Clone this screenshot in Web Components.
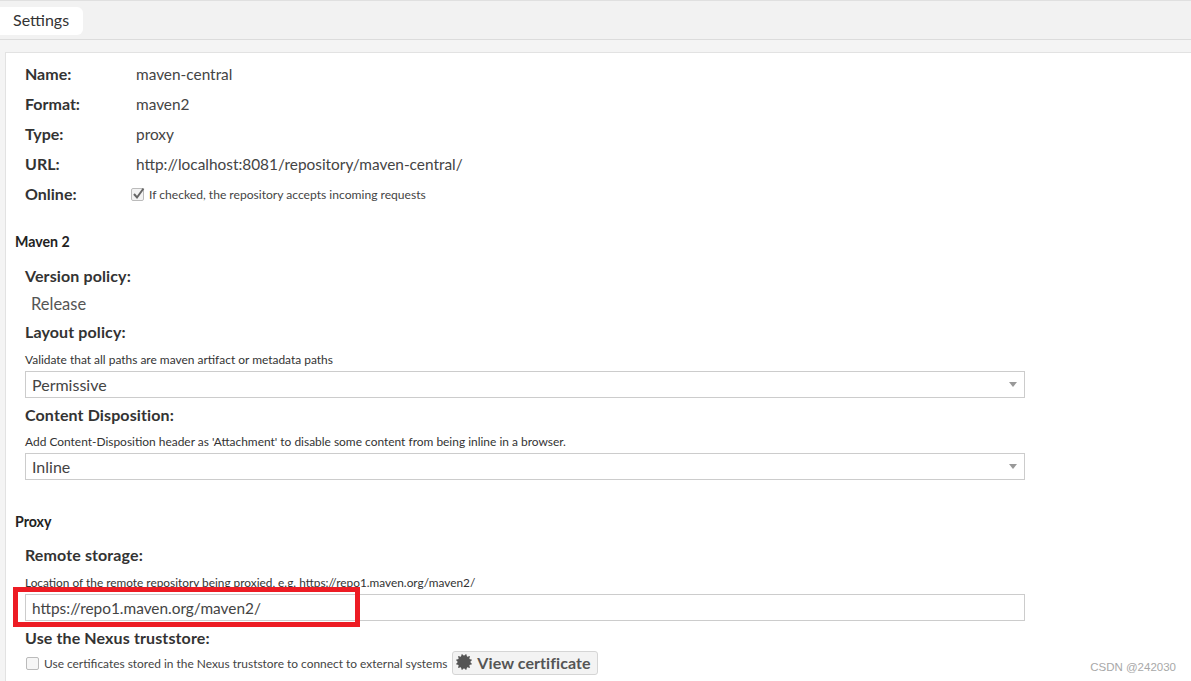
<!DOCTYPE html>
<html>
<head>
<meta charset="utf-8">
<style>
  html, body { margin: 0; height: 100%; overflow: hidden; background: #f4f4f4; }
  body { font-family: "Lato", "Liberation Sans", sans-serif; color: #333; }
</style>
</head>
<body>
<settings-page>
  <tab-bar label="Settings"></tab-bar>
  <form-panel>
    <info-row label="Name:">maven-central</info-row>
    <info-row label="Format:">maven2</info-row>
    <info-row label="Type:">proxy</info-row>
    <info-row label="URL:">http://localhost:8081/repository/maven-central/</info-row>
    <info-row label="Online:" check="checked">If checked, the repository accepts incoming requests</info-row>

    <section-title style="margin-top:25px">Maven 2</section-title>
    <form-field label="Version policy:" plain="Release" style="margin-top:16px"></form-field>
    <form-field label="Layout policy:" help="Validate that all paths are maven artifact or metadata paths" select="Permissive" style="margin-top:8px;--help-top:11px"></form-field>
    <form-field label="Content Disposition:" help="Add Content-Disposition header as 'Attachment' to disable some content from being inline in a browser." select="Inline" style="margin-top:7px"></form-field>

    <section-title style="margin-top:34px">Proxy</section-title>
    <form-field label="Remote storage:" help="Location of the remote repository being proxied, e.g. https://repo1.maven.org/maven2/" input="https://repo1.maven.org/maven2/" style="margin-top:15px;--help-top:11px;--help-size:11.85px"></form-field>
    <form-field label="Use the Nexus truststore:" style="margin-top:7px">
      <trust-line>Use certificates stored in the Nexus truststore to connect to external systems</trust-line>
    </form-field>
  </form-panel>
  <red-mark></red-mark>
  <water-mark>CSDN @242030</water-mark>
</settings-page>

<script>
class SettingsPage extends HTMLElement {
  constructor() {
    super();
    this.attachShadow({ mode: "open" }).innerHTML = `
      <style>
        :host { display: block; position: relative; height: 681px; overflow: hidden; }
      </style>
      <slot></slot>`;
  }
}

class TabBar extends HTMLElement {
  constructor() {
    super();
    this.attachShadow({ mode: "open" }).innerHTML = `
      <style>
        :host {
          display: flex; align-items: flex-start; box-sizing: border-box; height: 40px;
          padding-top: 6px; background: #f2f2f2;
          border-top: 1px solid #e0e0e0; border-bottom: 1px solid #dcdcdc;
        }
        .tab {
          box-sizing: border-box; height: 28px; width: 83px; padding: 0 0 0 13px;
          background: #fff; border-radius: 0 6px 6px 0;
          font-size: 16px; line-height: 26px; color: #333;
        }
      </style>
      <div class="tab"></div>`;
    this.shadowRoot.querySelector(".tab").textContent = this.getAttribute("label");
  }
}

class FormPanel extends HTMLElement {
  constructor() {
    super();
    this.attachShadow({ mode: "open" }).innerHTML = `
      <style>
        :host {
          display: block; box-sizing: border-box; height: 640px; margin: 12px 0 0 5px;
          padding: 6px 0 0 9px; background: #fff;
          border-top: 1px solid #e2e2e2; border-left: 1px solid #e2e2e2;
        }
      </style>
      <slot></slot>`;
  }
}

class InfoRow extends HTMLElement {
  constructor() {
    super();
    const check = this.hasAttribute("check");
    this.attachShadow({ mode: "open" }).innerHTML = `
      <style>
        :host {
          display: grid; grid-template-columns: 111px 1fr; align-items: center;
          height: 30px; padding-left: 10px; color: #333;
        }
        b { font-size: 16px; font-weight: 700; color: #333; position: relative; top: -1px; }
        .val { font-size: 15.4px; color: #444; display: flex; align-items: center; }
        .val.small { font-size: 12.1px; color: #444; gap: 4px; margin-left: -5px; }
        svg { flex: none; }
      </style>
      <b></b>
      <div class="val ${check ? "small" : ""}">
        ${check ? `<svg width="14" height="14" viewBox="0 0 14 14"><rect x=".5" y="1.5" width="12" height="12" rx="1.5" fill="#f3f3f3" stroke="#bbb"/><path d="M3 7l3 3.5L12.5 1.5" fill="none" stroke="#666" stroke-width="2"/></svg>` : ""}
        <slot></slot>
      </div>`;
    this.shadowRoot.querySelector("b").textContent = this.getAttribute("label");
  }
}

class SectionTitle extends HTMLElement {
  constructor() {
    super();
    this.attachShadow({ mode: "open" }).innerHTML = `
      <style>
        :host { display: block; font-size: 14.2px; font-weight: 700; line-height: 16px; color: #222; }
      </style>
      <slot></slot>`;
  }
}

class FormField extends HTMLElement {
  constructor() {
    super();
    const help = this.getAttribute("help");
    const plain = this.getAttribute("plain");
    const select = this.getAttribute("select");
    const input = this.getAttribute("input");
    let body = "";
    if (help) body += `<div class="help"></div>`;
    if (plain) body += `<div class="plain"></div>`;
    if (select) body += `<div class="box"><span class="txt"></span><i class="arrow"></i></div>`;
    if (input) body += `<div class="box url"><span class="txt"></span></div>`;
    this.attachShadow({ mode: "open" }).innerHTML = `
      <style>
        :host { display: block; padding-left: 10px; }
        .label { font-size: 16px; letter-spacing: .12px; font-weight: 700; line-height: 20px; color: #333; }
        .help {
          font-size: var(--help-size, 11.95px); line-height: 14px; color: #333;
          margin-top: var(--help-top, 10px); margin-bottom: 4px;
        }
        .plain { font-size: 16.5px; line-height: 20px; color: #555; padding: 8px 0 0 6px; }
        .box {
          box-sizing: border-box; width: 1000px; height: 27px; padding: 0 6px;
          display: flex; align-items: center; justify-content: space-between;
          border: 1px solid #ccc; background: #fff;
          font-size: 16px; color: #444;
        }
        .box.url { font-size: 15.4px; }
        .arrow {
          width: 0; height: 0; margin-right: 1px;
          border-left: 4px solid transparent; border-right: 4px solid transparent;
          border-top: 5px solid #999;
        }
      </style>
      <div class="label"></div>${body}<slot></slot>`;
    const root = this.shadowRoot;
    root.querySelector(".label").textContent = this.getAttribute("label");
    if (help) root.querySelector(".help").textContent = help;
    if (plain) root.querySelector(".plain").textContent = plain;
    if (select || input) root.querySelector(".txt").textContent = select || input;
  }
}

class TrustLine extends HTMLElement {
  constructor() {
    super();
    // gear of the button: twelve-point burst
    let pts = [];
    for (let i = 0; i < 24; i++) {
      const r = i % 2 ? 8.4 : 6.2;
      const a = i * Math.PI / 12;
      pts.push((8 + r * Math.cos(a)).toFixed(2) + "," + (8 + r * Math.sin(a)).toFixed(2));
    }
    this.attachShadow({ mode: "open" }).innerHTML = `
      <style>
        :host { display: flex; align-items: center; margin-top: 3px; font-size: 11.93px; color: #444; }
        .cb {
          box-sizing: border-box; width: 13px; height: 13px; margin: 0 5px 0 1px;
          border: 1px solid #bbb; border-radius: 2px; background: #f6f6f6;
        }
        button {
          display: flex; align-items: center; gap: 5px; box-sizing: border-box;
          height: 24px; width: 146px; margin-left: 5px; padding: 0 0 2px 3px;
          background: #f3f3f3; border: 1px solid #d5d5d5; border-radius: 3px;
          font: 700 16px "Lato", "Liberation Sans", sans-serif; letter-spacing: .08px; color: #555;
        }
      </style>
      <span class="cb"></span><span><slot></slot></span>
      <button type="button"><svg width="16" height="16" viewBox="0 0 16 16"><polygon fill="#555" points="${pts.join(" ")}"/></svg>View certificate</button>`;
  }
}

class RedMark extends HTMLElement {
  constructor() {
    super();
    this.attachShadow({ mode: "open" }).innerHTML = `
      <style>
        :host {
          position: absolute; left: 13px; top: 587px; width: 347px; height: 40px;
          box-sizing: border-box; border: 5px solid #ed1c24;
        }
      </style>`;
  }
}

class WaterMark extends HTMLElement {
  constructor() {
    super();
    this.attachShadow({ mode: "open" }).innerHTML = `
      <style>
        :host {
          position: absolute; right: 15px; top: 661px;
          font: 11.5px "Liberation Sans", sans-serif; color: #a8a8a8;
        }
      </style>
      <slot></slot>`;
  }
}

customElements.define("settings-page", SettingsPage);
customElements.define("tab-bar", TabBar);
customElements.define("form-panel", FormPanel);
customElements.define("info-row", InfoRow);
customElements.define("section-title", SectionTitle);
customElements.define("form-field", FormField);
customElements.define("trust-line", TrustLine);
customElements.define("red-mark", RedMark);
customElements.define("water-mark", WaterMark);
</script>
</body>
</html>
